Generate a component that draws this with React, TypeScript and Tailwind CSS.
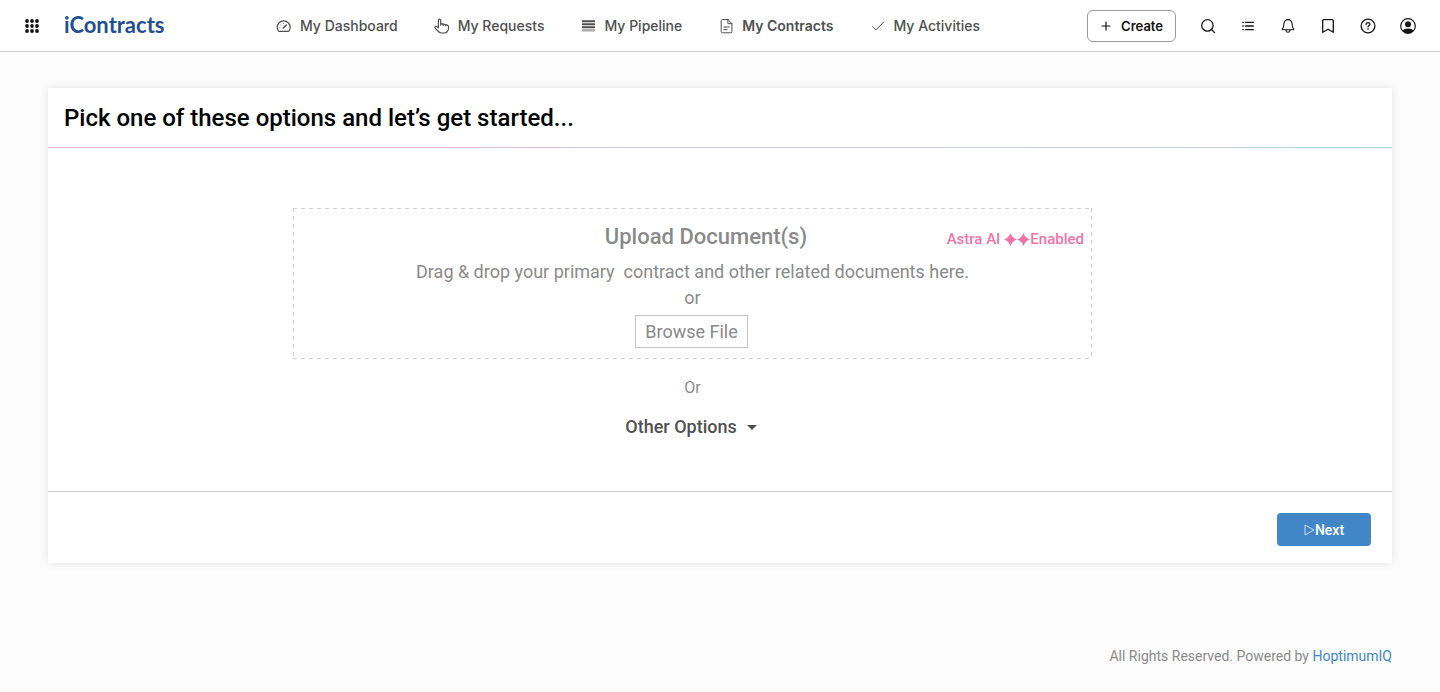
import type { ReactNode } from "react";

type IconProps = { children: ReactNode; size?: string; box?: string; width?: number };

function Icon({ children, size = "size-4", box = "0 0 16 16", width = 1 }: IconProps) {
  return (
    <svg
      className={`${size} shrink-0`}
      viewBox={box}
      fill="none"
      stroke="currentColor"
      strokeWidth={width}
      strokeLinecap="round"
      strokeLinejoin="round"
      aria-hidden="true"
    >
      {children}
    </svg>
  );
}

const navItems: { label: string; active?: boolean; icon: ReactNode }[] = [
  {
    label: "My Dashboard",
    icon: (
      <Icon width={1.2}>
        <path d="M2.4 13C1.600 11.900 1.200 10.700 1.200 9.300a6.500 6.500 0 0 1 13 0c0 1.400-.4 2.600-1.200 3.700-.2.200-.4.300-.7.300H3.100c-.3 0-.5-.1-.7-.3Z" />
        <path d="M7.300 10l2.900-2.900" strokeWidth={1.500} />
        <path d="M3.900 9.600h.1M5.200 6.900l.1.100M7.700 5.600v.1" strokeWidth={0.9} />
      </Icon>
    ),
  },
  {
    label: "My Requests",
    icon: (
      <Icon width={1.2}>
        <path d="M4.400 9.400V2.300c0-.7.500-1.200 1.100-1.200s1.200.5 1.200 1.200v3.400l5.900 1.100c1.200.2 1.900 1 1.900 2v1.500c0 2.800-2 4.700-4.800 4.700H7.500c-1.300 0-2.200-.6-3.100-1.500L1.200 10.200c-.5-.6-.5-1.300.1-1.700.5-.4 1.100-.3 1.600.1l1.500 1.300" />
        <path d="M9.200 6.200v1.200M11.800 6.700v1.100M6.700 5.700v1.500" />
      </Icon>
    ),
  },
  {
    label: "My Pipeline",
    icon: (
      <Icon>
        <g fill="currentColor" stroke="none">
          <path d="M2 2.200h13v2.100H2zM2 5.200h13v2H2zM2 8.200h13v2H2z" />
          <path d="M2 11.200h13v2.300H2z" opacity={0.5} />
        </g>
      </Icon>
    ),
  },
  {
    label: "My Contracts",
    active: true,
    icon: (
      <Icon>
        <path d="M9.900 1.500H4.400c-.7 0-1.200.5-1.200 1.200v10.900c0 .7.500 1.200 1.200 1.200h8.300c.7 0 1.200-.5 1.200-1.200V5.700L9.900 1.500Z" />
        <path d="M9.900 1.500v4.200h4M5.900 9h5.400M5.900 11.700h3.200" />
      </Icon>
    ),
  },
  {
    label: "My Activities",
    icon: (
      <Icon>
        <path d="M2.700 8.700l3.300 3.200 7.600-7.800" />
      </Icon>
    ),
  },
];

const tools: { label: string; icon: ReactNode }[] = [
  {
    label: "Search",
    icon: (
      <Icon width={1.3}>
        <circle cx="7.4" cy="7.4" r="5.7" />
        <path d="M11.5 11.5l3.1 3.1" />
      </Icon>
    ),
  },
  {
    label: "Lists",
    icon: (
      <Icon width={1.3}>
        <path d="M5.2 4.3h8.600M5.2 8h8.600M5.2 11.7h8.600" strokeLinecap="butt" />
        <path d="M2.3 4.3h1.500M2.3 8h1.500M2.3 11.7h1.500" strokeLinecap="butt" />
      </Icon>
    ),
  },
  {
    label: "Notifications",
    icon: (
      <Icon width={1.1}>
        <path d="M8 1.6c-2.5 0-4.1 1.9-4.1 4.3 0 3-.7 4.1-1.5 5-.3.4-.1.9.4.9h10.4c.5 0 .7-.5.4-.9-.8-.9-1.5-2-1.5-5C12.100 3.500 10.500 1.600 8 1.600Z" />
        <path d="M6.100 12v.4c0 1 .8 1.800 1.900 1.800s1.900-.8 1.900-1.800V12" />
      </Icon>
    ),
  },
  {
    label: "Bookmarks",
    icon: (
      <Icon width={1.3}>
        <path d="M2.700 14.300V2.700c0-.6.4-1 1-1h8.600c.6 0 1 .4 1 1v11.600L8 11.200l-5.300 3.100Z" />
      </Icon>
    ),
  },
  {
    label: "Help",
    icon: (
      <Icon width={1.3}>
        <circle cx="8" cy="8" r="6.900" />
        <path d="M6.100 6.400c0-1 .8-1.700 1.900-1.700s1.900.7 1.900 1.600c0 1.200-1.800 1.300-1.900 2.600" />
        <circle cx="8" cy="11.100" r=".8" fill="currentColor" stroke="none" />
      </Icon>
    ),
  },
  {
    label: "Account",
    icon: (
      <Icon width={1.2}>
        <circle cx="8" cy="8" r="7.300" />
        <circle cx="8" cy="6.200" r="3" fill="currentColor" stroke="none" />
        <path d="M2.500 13C3.500 11.200 5.500 10.500 8 10.500s4.500.7 5.500 2.500A7.300 7.300 0 0 1 2.500 13Z" fill="currentColor" stroke="none" />
      </Icon>
    ),
  },
];

function AppHeader() {
  return (
    <header className="flex h-[52px] items-center border-b border-[#cfcfcf] bg-white pr-5 pl-6 font-['Inter',sans-serif]">
      <button type="button" aria-label="Apps" className="text-[#111]">
        <svg className="size-4" viewBox="0 0 16 16" fill="currentColor" aria-hidden="true">
          {[3, 8, 13].map((y) => [3, 8, 13].map((x) => <circle key={`${x}-${y}`} cx={x} cy={y} r="1.9" />))}
        </svg>
      </button>
      <a
        href="#"
        className="ml-6 w-[98px] pb-[2px] font-['Lato',sans-serif] text-[22px] leading-8 font-bold text-[#1f5091]"
      >
        iContracts
      </a>
      <nav className="ml-[114px] flex items-center gap-9">
        {navItems.map((item) => (
          <a
            key={item.label}
            href="#"
            aria-current={item.active ? "page" : undefined}
            className={`flex items-center gap-2 text-sm whitespace-nowrap text-[#4f4f4f] ${item.active ? "font-semibold" : "font-medium"}`}
          >
            {item.icon}
            {item.label}
          </a>
        ))}
      </nav>
      <div className="ml-auto flex items-center gap-5">
        <button
          type="button"
          className="flex h-8 items-center gap-[9px] rounded-md border border-[#9a9a9a] px-3 pt-px text-[13px] leading-5 font-semibold text-[#111]"
        >
          <Icon size="size-3" box="0 0 12 12" width={1.2}>
            <path d="M6 2v8M2 6h8" />
          </Icon>
          Create
        </button>
        <div className="flex items-center gap-4 text-[#161616]">
          {tools.map((tool) => (
            <button key={tool.label} type="button" aria-label={tool.label} className="flex size-6 items-center justify-center">
              {tool.icon}
            </button>
          ))}
        </div>
      </div>
    </header>
  );
}

function Spark() {
  return (
    <svg className="size-[13px]" viewBox="0 0 12 12" fill="currentColor" aria-hidden="true">
      <path d="M6 0C7.200 3.200 8.800 4.800 12 6 8.800 7.200 7.200 8.800 6 12 4.800 8.800 3.200 7.200 0 6 3.200 4.800 4.800 3.200 6 0Z" />
    </svg>
  );
}

const dashedFrame =
  "bg-[repeating-linear-gradient(90deg,#cfcfcf_0_4px,transparent_4px_8px),repeating-linear-gradient(90deg,#cfcfcf_0_4px,transparent_4px_8px),repeating-linear-gradient(180deg,#cfcfcf_0_4px,transparent_4px_8px),repeating-linear-gradient(180deg,#cfcfcf_0_4px,transparent_4px_8px)] bg-[size:100%_1px,100%_1px,1px_100%,1px_100%] bg-[position:0_0,0_100%,0_0,100%_0] bg-no-repeat";

function DropZone() {
  return (
    <section className={`flex w-full max-w-[799px] flex-col items-center px-px pt-[13px] pb-[11px] ${dashedFrame}`}>
      <div className="grid w-full grid-cols-[1fr_auto_1fr] items-center pr-[7px] pl-[34px]">
        <h2 className="col-start-2 text-[22px] leading-8 font-medium text-[#8a8a8a]">Upload Document(s)</h2>
        <p className="flex items-center justify-end pt-1 text-[15px] leading-5 font-medium text-[#f075a6]">
          <span className="pr-1">Astra AI</span>
          <Spark />
          <Spark />
          <span>Enabled</span>
        </p>
      </div>
      <p className="pt-[6px] text-center text-lg leading-[26px] whitespace-pre-wrap text-[#8a8a8a]">
        {"Drag & drop your primary  contract and other related documents here.\nor"}
      </p>
      <button type="button" className="mt-1 mr-[2px] h-[33px] border border-[#c4c4c4] px-[9px] text-lg leading-6 text-[#8a8a8a]">
        Browse File
      </button>
    </section>
  );
}

export default function App() {
  return (
    <div className="flex min-h-screen flex-col bg-[#fcfcfc] font-['Roboto',sans-serif]">
      <AppHeader />
      <main className="mx-12 mt-9 bg-white shadow-[0_0_8px_rgba(0,0,0,0.1)]">
        <h1 className="px-4 pt-[14px] pb-[13px] text-2xl leading-8 font-medium text-black">
          Pick one of these options and let’s get started...
        </h1>
        <div className="h-px bg-[linear-gradient(90deg,#e6b6d6_0%,#dfbbd4_30%,#c9c9d2_45%,#c6cad2_72%,#b4d4dc_100%)]" />
        <div className="flex flex-col items-center pt-[60px] pr-[55px] pb-[50px]">
          <DropZone />
          <p className="mt-[17px] text-base leading-6 text-[#8a8a8a]">Or</p>
          <button type="button" className="mt-[13px] mr-[3px] flex items-center gap-[10px] text-lg leading-7 font-medium text-[#505050]">
            Other Options
            <svg className="h-[5px] w-[10px]" viewBox="0 0 10 5" fill="currentColor" aria-hidden="true">
              <path d="M0 0h10L5 5Z" />
            </svg>
          </button>
        </div>
        <div className="flex justify-end border-t border-[#c6c6c6] pt-[21px] pr-[21px] pb-[17px]">
          <button
            type="button"
            className="flex h-[33px] w-[94px] items-center justify-center rounded bg-[#4187c7] text-sm font-medium text-white"
          >
            <svg className="h-3 w-[11px]" viewBox="0 0 11 12" fill="none" stroke="currentColor" strokeWidth={0.7} aria-hidden="true">
              <path d="M1 1l9 5-9 5Z" />
            </svg>
            Next
          </button>
        </div>
      </main>
      <footer className="mt-auto px-12 pb-[25px] text-right text-sm leading-[22px] text-[#8a8a8a]">
        All Rights Reserved. Powered by{" "}
        <a href="#" className="text-[#4187c7]">
          HoptimumIQ
        </a>
      </footer>
    </div>
  );
}
